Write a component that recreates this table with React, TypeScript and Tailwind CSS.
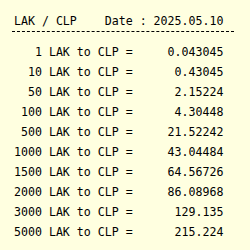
const rows: [string, string][] = [
  ["1", "0.043045"],
  ["10", "0.43045"],
  ["50", "2.15224"],
  ["100", "4.30448"],
  ["500", "21.52242"],
  ["1000", "43.04484"],
  ["1500", "64.56726"],
  ["2000", "86.08968"],
  ["3000", "129.135"],
  ["5000", "215.224"],
];

export default function App() {
  return (
    <div className="w-[250px] h-[250px] overflow-hidden bg-[#ffffe0] text-black font-['DejaVu_Sans_Mono',monospace] text-[11.6px] leading-[20px] pt-[11px] whitespace-pre">
      <div className="ml-[12px] w-[222px] pl-[2px] border-b border-dashed border-black">
        LAK / CLP    Date : 2025.05.10
      </div>
      <div className="mt-[9.5px] pl-[14px]">
        {rows.map(([amount, value]) => (
          <div key={amount}>{`${amount.padStart(4)} LAK to CLP = ${value.padStart(12)}`}</div>
        ))}
      </div>
    </div>
  );
}
